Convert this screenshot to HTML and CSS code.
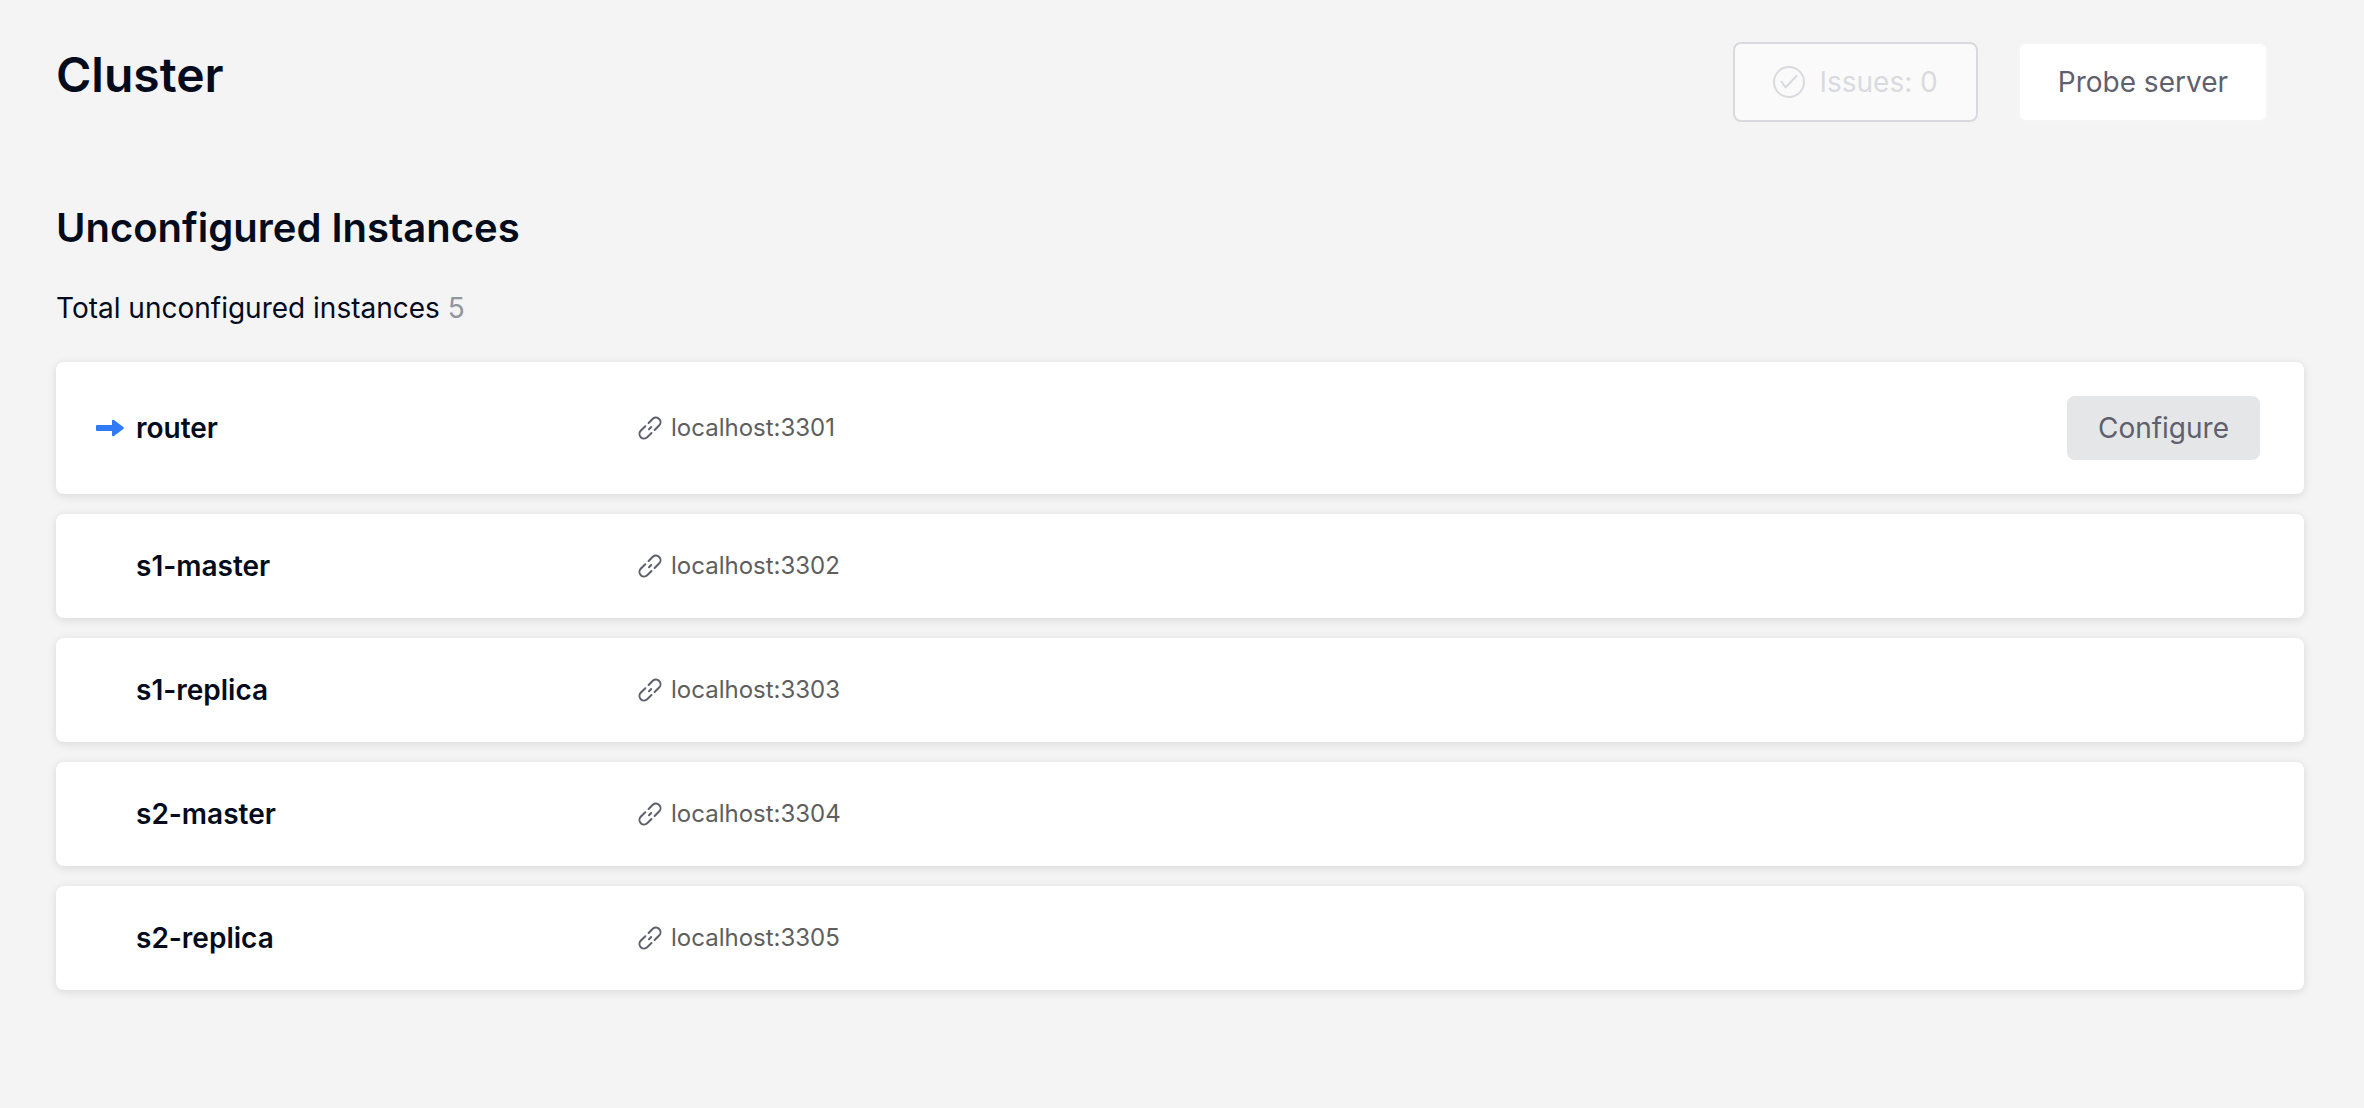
FILE: index.html
```
<!DOCTYPE html>
<html lang="en">
<head>
<meta charset="utf-8">
<meta name="viewport" content="width=device-width, initial-scale=1">
<title>Cluster</title>
<link rel="stylesheet" href="styles.css">
</head>
<body>
<svg class="sprite" aria-hidden="true">
  <symbol id="icon-link" viewBox="0 0 26 26">
    <g fill="none" stroke="currentColor" stroke-width="2" stroke-linecap="round">
      <path d="M11.600 8L15.800 3.800A4.600 4.600 0 0 1 22.300 10.300L17.600 15"/>
      <path d="M14.500 18L10.200 22.300A4.600 4.600 0 0 1 3.700 15.800L8.300 11.200"/>
      <path d="M12 14.200L14.200 12"/>
    </g>
  </symbol>
</svg>
<main class="page">
  <header class="page-header">
    <h1 class="page-title">Cluster</h1>
    <div class="actions">
      <button class="button button-issues" type="button" disabled>
        <svg class="check-icon" viewBox="0 0 32 32" aria-hidden="true">
          <g fill="none" stroke="currentColor" stroke-width="2">
            <circle cx="16" cy="16" r="15"/>
            <path d="M8.500 15.500L12.500 21.500L23.500 10" stroke-linecap="round" stroke-linejoin="round"/>
          </g>
        </svg>
        Issues: 0
      </button>
      <button class="button button-probe" type="button">Probe server</button>
    </div>
  </header>

  <section>
    <h2 class="section-title">Unconfigured Instances</h2>
    <p class="total">Total unconfigured instances <span class="total-count">5</span></p>
    <ul class="instances">
      <li class="instance">
        <svg class="arrow-icon" viewBox="0 0 28 18" aria-hidden="true"><path fill="currentColor" d="M1 6H16V2Q16 0 18 1L27.300 8Q28.400 9 27.300 10L18 17Q16 18 16 16V12H1Q0 12 0 11V7Q0 6 1 6Z"/></svg>
        <span class="name">router</span>
        <span class="address"><svg class="link-icon" aria-hidden="true"><use href="#icon-link"/></svg>localhost:3301</span>
        <button class="button button-configure" type="button">Configure</button>
      </li>
      <li class="instance">
        <span class="name">s1-master</span>
        <span class="address"><svg class="link-icon" aria-hidden="true"><use href="#icon-link"/></svg>localhost:3302</span>
      </li>
      <li class="instance">
        <span class="name">s1-replica</span>
        <span class="address"><svg class="link-icon" aria-hidden="true"><use href="#icon-link"/></svg>localhost:3303</span>
      </li>
      <li class="instance">
        <span class="name">s2-master</span>
        <span class="address"><svg class="link-icon" aria-hidden="true"><use href="#icon-link"/></svg>localhost:3304</span>
      </li>
      <li class="instance">
        <span class="name">s2-replica</span>
        <span class="address"><svg class="link-icon" aria-hidden="true"><use href="#icon-link"/></svg>localhost:3305</span>
      </li>
    </ul>
  </section>
</main>
</body>
</html>
```
FILE: styles.css
```
* {
  box-sizing: border-box;
}

body {
  margin: 0;
  background: #f4f4f4;
  color: #040b1d;
  font-family: Inter, "Liberation Sans", sans-serif;
  font-size: 28px;
  line-height: 44px;
}

h1, h2, p, ul {
  margin: 0;
  padding: 0;
}

.sprite {
  display: none;
}

.page {
  padding: 42px 60px 64px 56px;
}

.page-header {
  display: flex;
  justify-content: space-between;
  align-items: flex-start;
  padding-right: 36px;
  margin-bottom: 76px;
}

.page-title {
  font-size: 48px;
  font-weight: 600;
  line-height: 66px;
}

.actions {
  display: flex;
  gap: 40px;
}

.button {
  display: flex;
  align-items: center;
  justify-content: center;
  border: 2px solid transparent;
  border-radius: 8px;
  color: #5f606d;
  font: inherit;
  font-weight: 400;
}

.button-issues {
  gap: 14px;
  height: 80px;
  padding: 0 38px;
  border-color: #d9dae0;
  background: #fafafa;
  color: #d9dae0;
}

.button-probe {
  height: 80px;
  padding: 0 38px;
  border-color: #f5f5f5;
  background: #fff;
}

.check-icon {
  width: 32px;
  height: 32px;
}

.section-title {
  font-size: 40px;
  font-weight: 600;
  line-height: 60px;
  margin-bottom: 28px;
}

.total {
  margin-bottom: 32px;
}

.total-count {
  color: #93959d;
}

.instances {
  display: grid;
  gap: 20px;
  list-style: none;
}

.instance {
  display: grid;
  grid-template-columns: 40px 500px 1fr auto;
  align-items: center;
  min-height: 104px;
  padding: 30px 44px 30px 40px;
  border-radius: 8px;
  background: #fff;
  box-shadow: 0 2px 10px rgba(0, 0, 0, 0.11);
}

.instance:has(.button) {
  padding-block: 34px;
}

.arrow-icon {
  width: 28px;
  height: 18px;
  color: #2f7bf6;
}

.name {
  grid-column: 2;
  font-weight: 600;
}

.address {
  grid-column: 3;
  display: flex;
  align-items: center;
  gap: 8px;
  padding-left: 1px;
  color: #5e5e5e;
  font-size: 24px;
}

.link-icon {
  width: 26px;
  height: 26px;
  color: #5f606d;
}

.button-configure {
  height: 64px;
  padding: 0 29px;
  background: #e5e6e8;
  border-color: #e5e6e8;
}
```
